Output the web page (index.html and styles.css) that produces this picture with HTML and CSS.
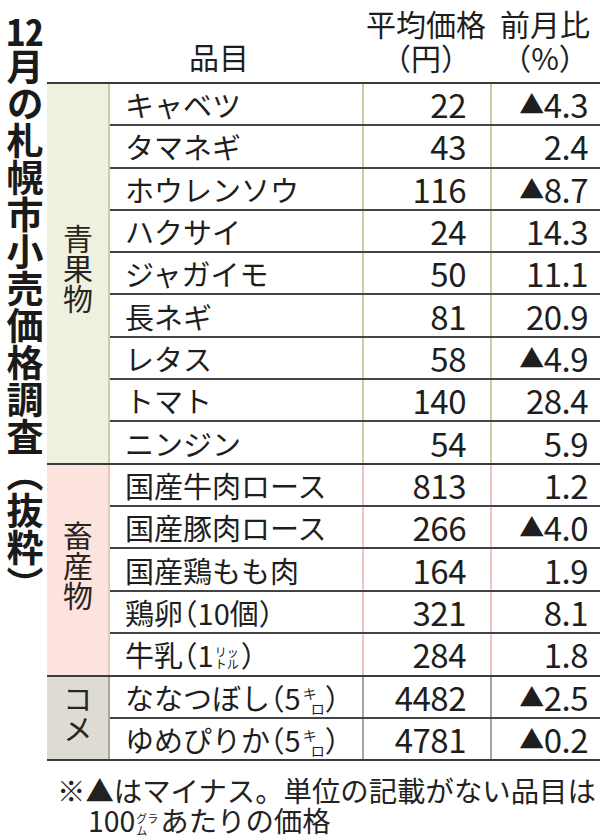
FILE: index.html
```html
<!DOCTYPE html>
<html lang="ja">
<head>
<meta charset="utf-8">
<link rel="stylesheet" href="styles.css">
</head>
<body>
<div class="page">
  <div class="title"><span class="tcy">12</span>月の札幌市小売価格調査（抜粋）</div>
  <div class="main">
    <div class="head">
      <div class="h-cat"></div>
      <div class="h-item">品目</div>
      <div class="h-price">平均価格<br>（円）</div>
      <div class="h-pct">前月比<br>（%）</div>
    </div>

    <div class="group veg">
      <div class="cat">青果物</div>
      <div class="rows">
        <div class="row"><span class="item">キャベツ</span><span class="price">22</span><span class="pct"><span class="tri">▲</span>4.3</span></div>
        <div class="row"><span class="item">タマネギ</span><span class="price">43</span><span class="pct">2.4</span></div>
        <div class="row"><span class="item">ホウレンソウ</span><span class="price">116</span><span class="pct"><span class="tri">▲</span>8.7</span></div>
        <div class="row"><span class="item">ハクサイ</span><span class="price">24</span><span class="pct">14.3</span></div>
        <div class="row"><span class="item">ジャガイモ</span><span class="price">50</span><span class="pct">11.1</span></div>
        <div class="row"><span class="item">長ネギ</span><span class="price">81</span><span class="pct">20.9</span></div>
        <div class="row"><span class="item">レタス</span><span class="price">58</span><span class="pct"><span class="tri">▲</span>4.9</span></div>
        <div class="row"><span class="item">トマト</span><span class="price">140</span><span class="pct">28.4</span></div>
        <div class="row"><span class="item">ニンジン</span><span class="price">54</span><span class="pct">5.9</span></div>
      </div>
    </div>

    <div class="group meat">
      <div class="cat">畜産物</div>
      <div class="rows">
        <div class="row"><span class="item">国産牛肉ロース</span><span class="price">813</span><span class="pct">1.2</span></div>
        <div class="row"><span class="item">国産豚肉ロース</span><span class="price">266</span><span class="pct"><span class="tri">▲</span>4.0</span></div>
        <div class="row"><span class="item">国産鶏もも肉</span><span class="price">164</span><span class="pct">1.9</span></div>
        <div class="row"><span class="item">鶏卵<span class="p">（</span>10個<span class="p">）</span></span><span class="price">321</span><span class="pct">8.1</span></div>
        <div class="row"><span class="item">牛乳<span class="p">（</span>1<span class="unit"><span>リッ</span><span>トル</span></span><span class="p">）</span></span><span class="price">284</span><span class="pct">1.8</span></div>
      </div>
    </div>

    <div class="group rice">
      <div class="cat">コメ</div>
      <div class="rows">
        <div class="row"><span class="item">ななつぼし<span class="p">（</span>5<span class="kg"><span class="ki">キ</span><span class="ro">ロ</span></span><span class="p">）</span></span><span class="price">4482</span><span class="pct"><span class="tri">▲</span>2.5</span></div>
        <div class="row"><span class="item">ゆめぴりか<span class="p">（</span>5<span class="kg"><span class="ki">キ</span><span class="ro">ロ</span></span><span class="p">）</span></span><span class="price">4781</span><span class="pct"><span class="tri">▲</span>0.2</span></div>
      </div>
    </div>

    <p class="note">※▲はマイナス。単位の記載がない品目は<br>100<span class="unit small"><span>グラ</span><span>ム</span></span>あたりの価格</p>
  </div>
</div>
</body>
</html>
```

FILE: styles.css
```css
* { box-sizing: border-box; }

html, body {
  margin: 0;
  padding: 0;
  background: #ffffff;
}

body {
  font-family: "Noto Sans CJK JP", "Noto Sans", sans-serif;
  color: #1e1e1e;
  width: 600px;
  height: 838px;
  overflow: hidden;
}

.page {
  display: flex;
  align-items: flex-start;
}

.title {
  writing-mode: vertical-rl;
  width: 47px;
  flex: 0 0 47px;
  font-size: 37px;
  font-weight: 700;
  line-height: 44px;
  padding-top: 11px;
  color: #1a1a1a;
}

.tcy {
  text-combine-upright: all;
}

.main {
  flex: 1;
  display: flex;
  flex-direction: column;
}

.head {
  display: grid;
  grid-template-columns: 61px 254px 128px 110px;
  height: 84px;
  border-bottom: 2px solid #3a3a3a;
  font-size: 30px;
  line-height: 34px;
}

.h-item {
  align-self: end;
  text-align: center;
  padding-right: 32px;
  padding-bottom: 9px;
}

.h-price, .h-pct {
  text-align: center;
  padding-top: 6px;
}

.group {
  display: flex;
  border-bottom: 2px solid #3a3a3a;
}

.cat {
  width: 61px;
  flex: 0 0 61px;
  writing-mode: vertical-rl;
  display: flex;
  align-items: center;
  justify-content: center;
  font-size: 30px;
  line-height: 61px;
  color: #2a2420;
  padding-bottom: 8px;
}

.rows {
  flex: 1;
  display: flex;
  flex-direction: column;
  border-left: 2px solid var(--vline);
}

.row {
  display: grid;
  grid-template-columns: 252px 128px 110px;
  height: 42.3px;
  align-items: center;
  border-bottom: 2px solid #444;
}

.row:last-child {
  border-bottom: none;
  height: 40.5px;
}

.item {
  font-size: 29px;
  padding-left: 15px;
  white-space: nowrap;
  line-height: 40px;
}

.p {
  font-feature-settings: "halt";
}

.price, .pct {
  font-size: 33px;
  text-align: right;
  line-height: 40px;
  height: 100%;
  display: flex;
  align-items: center;
  justify-content: flex-end;
  border-left: 2px solid var(--vline);
  letter-spacing: -0.5px;
}

.price { padding-right: 24px; }
.pct { padding-right: 12px; }

.tri {
  font-size: 25px;
  margin-right: 0;
  position: relative;
  top: -1px;
}

.veg { --vline: #cccca6; }
.veg .cat { background: #eef1e0; }

.meat { --vline: #ecc6bf; }
.meat .cat { background: #fce3de; }

.rice { --vline: #a8a69c; }
.rice .cat { background: #dedcd2; }

.unit {
  display: inline-flex;
  flex-direction: column;
  font-size: 12px;
  line-height: 12px;
  vertical-align: middle;
  margin: 0 2px 0 1px;
  position: relative;
  top: -1px;
}

.unit span { display: block; }

.kg {
  display: inline-block;
  position: relative;
  width: 24px;
  height: 28px;
  vertical-align: middle;
}

.kg .ki {
  position: absolute;
  left: 2px;
  top: -2px;
  font-size: 14px;
  line-height: 14px;
}

.kg .ro {
  position: absolute;
  left: 10px;
  top: 13px;
  font-size: 14px;
  line-height: 14px;
}

.note {
  margin: 14px 0 0 0;
  padding-left: 41px;
  text-indent: -31px;
  font-size: 28.4px;
  line-height: 30px;
  white-space: nowrap;
  color: #222;
}

.unit.small {
  font-size: 11px;
  line-height: 12px;
  text-indent: 0;
  margin: 0 2px 0 1px;
}
```
